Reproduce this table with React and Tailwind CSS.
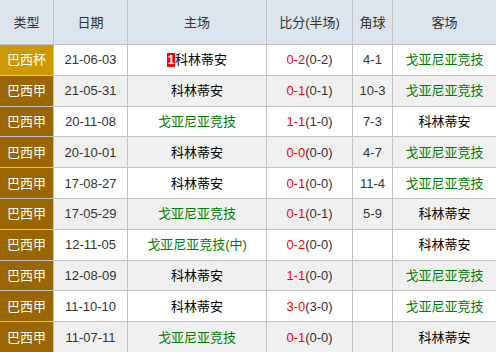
const rows = [
  { type: '巴西杯', date: '21-06-03', home: '科林蒂安', homeGreen: false, mark: '1', score: '0-2', half: '(0-2)', corner: '4-1', away: '戈亚尼亚竞技', awayGreen: true },
  { type: '巴西甲', date: '21-05-31', home: '科林蒂安', homeGreen: false, score: '0-1', half: '(0-1)', corner: '10-3', away: '戈亚尼亚竞技', awayGreen: true },
  { type: '巴西甲', date: '20-11-08', home: '戈亚尼亚竞技', homeGreen: true, score: '1-1', half: '(1-0)', corner: '7-3', away: '科林蒂安', awayGreen: false },
  { type: '巴西甲', date: '20-10-01', home: '科林蒂安', homeGreen: false, score: '0-0', half: '(0-0)', corner: '4-7', away: '戈亚尼亚竞技', awayGreen: true },
  { type: '巴西甲', date: '17-08-27', home: '科林蒂安', homeGreen: false, score: '0-1', half: '(0-0)', corner: '11-4', away: '戈亚尼亚竞技', awayGreen: true },
  { type: '巴西甲', date: '17-05-29', home: '戈亚尼亚竞技', homeGreen: true, score: '0-1', half: '(0-1)', corner: '5-9', away: '科林蒂安', awayGreen: false },
  { type: '巴西甲', date: '12-11-05', home: '戈亚尼亚竞技(中)', homeGreen: true, score: '0-2', half: '(0-0)', corner: '', away: '科林蒂安', awayGreen: false },
  { type: '巴西甲', date: '12-08-09', home: '科林蒂安', homeGreen: false, score: '1-1', half: '(0-0)', corner: '', away: '戈亚尼亚竞技', awayGreen: true },
  { type: '巴西甲', date: '11-10-10', home: '科林蒂安', homeGreen: false, score: '3-0', half: '(3-0)', corner: '', away: '戈亚尼亚竞技', awayGreen: true },
  { type: '巴西甲', date: '11-07-11', home: '戈亚尼亚竞技', homeGreen: true, score: '0-1', half: '(0-0)', corner: '', away: '科林蒂安', awayGreen: false },
];

const headers = ['类型', '日期', '主场', '比分(半场)', '角球', '客场'];

const cell = 'flex items-center justify-center whitespace-nowrap';

const App = () => {
  return (
    <div
      className="w-[496px] h-[352px] overflow-hidden bg-white text-[13px] leading-none"
      style={{ fontFamily: '"Liberation Sans", "Noto Sans CJK SC", sans-serif' }}
    >
      <div className="grid grid-cols-[53px_73px_138px_85px_39px_103px] grid-rows-[44px_repeat(10,29.8px)] gap-px bg-[#c2c2c2]">
        {headers.map((h) => (
          <div key={h} className={`${cell} bg-[#dce4ee] text-[#333]`}>
            {h}
          </div>
        ))}

        {rows.map((r, i) => {
          const bg = i % 2 === 0 ? 'bg-white' : 'bg-[#f0f0f0]';
          return (
            <div key={r.date} className="contents">
              <div className={`${cell} text-white ${i === 0 ? 'bg-[#cc9900]' : 'bg-[#996600]'}`}>
                {r.type}
              </div>
              <div className={`${cell} ${bg} text-[#333]`}>{r.date}</div>
              <div className={`${cell} ${bg} ${r.homeGreen ? 'text-[#008000]' : 'text-black'}`}>
                {r.mark && (
                  <span className="inline-flex items-center justify-center w-[8px] h-[14px] bg-[#ff0000] text-white font-bold text-[12px]">
                    {r.mark}
                  </span>
                )}
                {r.home}
              </div>
              <div className={`${cell} ${bg}`}>
                <span className="text-[#ff0000]">{r.score}</span>
                <span className="text-[#333]">{r.half}</span>
              </div>
              <div className={`${cell} ${bg} text-[#333]`}>{r.corner}</div>
              <div className={`${cell} ${bg} ${r.awayGreen ? 'text-[#008000]' : 'text-black'}`}>
                {r.away}
              </div>
            </div>
          );
        })}
      </div>
    </div>
  );
};

export default App;
